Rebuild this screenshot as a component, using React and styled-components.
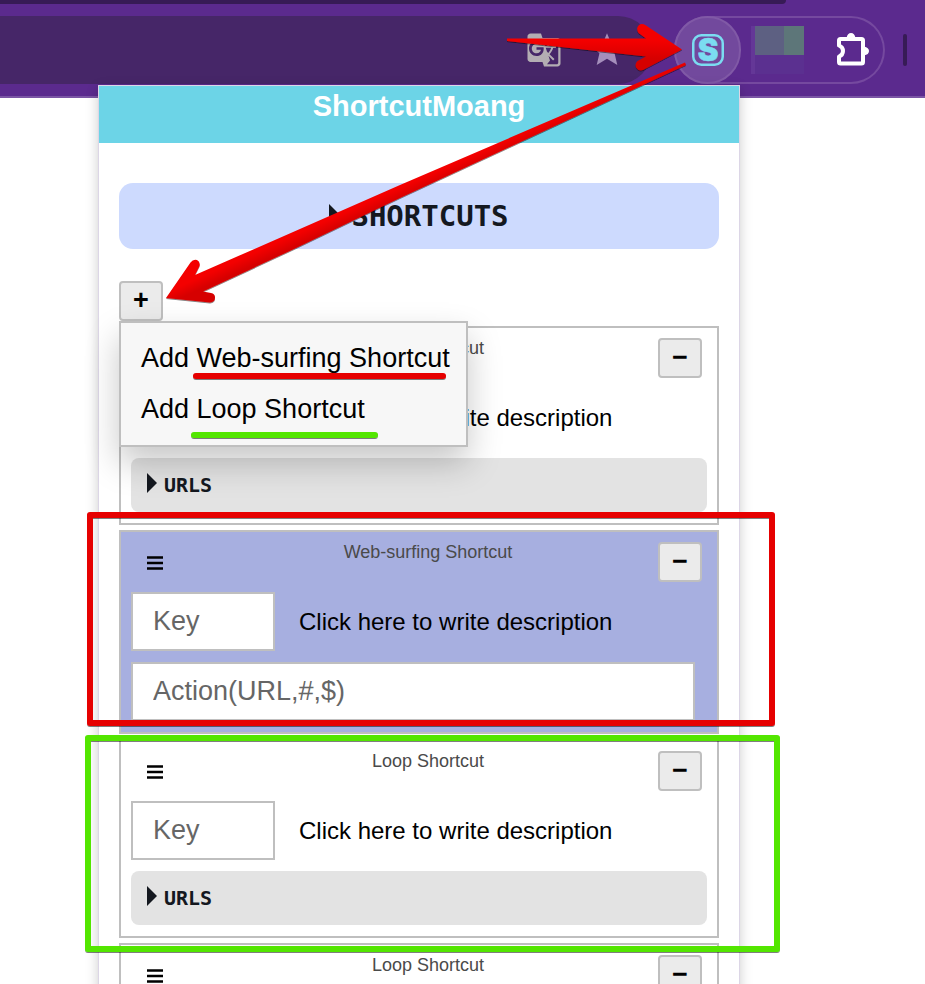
import React, { useState } from 'react';
import styled, { createGlobalStyle } from 'styled-components';
import { MdGTranslate, MdStar } from 'react-icons/md';

const GlobalStyle = createGlobalStyle`
  * {
    box-sizing: border-box;
  }

  body {
    margin: 0;
    background: #fff;
    font-family: 'Liberation Sans', Arial, sans-serif;
  }

  button,
  input {
    font-family: inherit;
  }
`;

const Screen = styled.div`
  position: relative;
  height: 100vh;
  overflow: hidden;
`;

const TabStrip = styled.div`
  background: #5b2a8e;

  div {
    width: 85%;
    height: 4px;
    background: #371b56;
    border-radius: 0 0 12px 0;
  }
`;

const Toolbar = styled.div`
  display: flex;
  align-items: center;
  padding: 12px 18px 12px 0;
  background: #5b2a8e;
  border-bottom: 2px solid #7b55a5;
`;

const AddressBar = styled.div`
  flex: 1;
  display: flex;
  align-items: center;
  justify-content: flex-end;
  gap: 25px;
  height: 68px;
  margin-right: 22px;
  padding-right: 25px;
  background: #462668;
  border-radius: 0 34px 34px 0;
`;

const ToolButton = styled.button`
  display: flex;
  padding: 0;
  border: none;
  background: none;
  color: ${({ $color }) => $color};
`;

const Extensions = styled.div`
  display: flex;
  align-items: center;
  height: 68px;
  padding-right: 15px;
  border-radius: 34px;
  box-shadow: inset 0 0 0 2px #75499f;
`;

const ActiveExtension = styled.button`
  display: flex;
  align-items: center;
  justify-content: center;
  width: 67px;
  height: 68px;
  margin-right: 10px;
  padding: 0;
  border: 2px solid #8059a6;
  border-radius: 34px;
  background: #72499d;
`;

const Mosaic = styled.div`
  display: grid;
  grid-template-columns: 4px 29px 20px;
  grid-template-rows: 29px 19px;
  margin-right: 32px;
  background: #5b3090;

  span:nth-child(1) {
    grid-row: 1 / 3;
    background: #643797;
  }

  span:nth-child(2) {
    background: #5d6082;
  }

  span:nth-child(3) {
    background: #5d7679;
  }
`;

const Divider = styled.div`
  width: 4px;
  height: 32px;
  margin-left: 18px;
  border-radius: 2px;
  background: #371b56;
`;

const Popup = styled.main`
  position: relative;
  margin: -13px 185px 0 98px;
  border: 1px solid #dcd6e6;
  background: #fff;
  box-shadow: 0 4px 12px rgba(0, 0, 0, 0.2);
`;

const Header = styled.header`
  padding: 4px 0 20px;
  background: #6cd4e7;

  h1 {
    margin: 0;
    color: #fff;
    font-size: 29px;
    line-height: 33px;
    text-align: center;
  }
`;

const Content = styled.div`
  padding: 40px 20px;
`;

const Section = styled.details`
  margin-bottom: 32px;
  border-radius: 14px;
  background: #cddafe;
`;

const Summary = styled.summary`
  display: flex;
  align-items: center;
  justify-content: ${({ $large }) => ($large ? 'center' : 'flex-start')};
  gap: ${({ $large }) => ($large ? '12px' : '7px')};
  height: ${({ $large }) => ($large ? '66px' : '54px')};
  padding: 0 16px;
  color: #14181f;
  font-family: 'DejaVu Sans Mono', monospace;
  font-size: ${({ $large }) => ($large ? '29px' : '20px')};
  font-weight: bold;
  list-style: none;

  svg {
    margin-bottom: 4px;
  }
`;

const AddArea = styled.div`
  position: relative;
  margin-bottom: 5px;
`;

const SquareButton = styled.button`
  display: flex;
  align-items: center;
  justify-content: center;
  width: 44px;
  height: 40px;
  padding: 0 0 2px;
  border: 2px solid #bfbfbf;
  border-radius: 4px;
  background: #ebebeb;
  color: #000;
  font-size: 27px;
  font-weight: bold;
  line-height: 30px;
`;

const Menu = styled.div`
  position: absolute;
  top: 100%;
  left: 0;
  z-index: 1;
  padding: 10px 0;
  border: 2px solid #bfbfbf;
  background: #f7f7f7;
  box-shadow: 0 16px 32px rgba(0, 0, 0, 0.22);
`;

const MenuItem = styled.button`
  display: block;
  width: 100%;
  height: 51px;
  padding: 0 16px 0 20px;
  border: none;
  background: none;
  color: #000;
  font-size: 27px;
  text-align: left;
  white-space: nowrap;
`;

const CardList = styled.div`
  display: flex;
  flex-direction: column;
  gap: 5px;
`;

const Card = styled.section`
  padding: 10px 10px 11px;
  border: 2px solid #bfbfbf;
  background: ${({ $active }) => ($active ? '#a7afe0' : '#fff')};
`;

const CardTop = styled.div`
  display: flex;
  align-items: flex-start;
  height: 50px;
  padding-right: 5px;
`;

const Handle = styled.button`
  width: 67px;
  padding: 14px 16px;
  border: none;
  background: none;
  text-align: left;

  svg {
    display: block;
  }
`;

const CardType = styled.span`
  flex: 1;
  color: #4a4a4a;
  font-size: 18px;
  line-height: 20px;
  text-align: center;
`;

const KeyRow = styled.div`
  display: flex;
  align-items: center;
  gap: 24px;
  margin-bottom: 11px;
`;

const TextInput = styled.input`
  display: block;
  width: ${({ $wide }) => ($wide ? 'calc(100% - 12px)' : '144px')};
  height: 59px;
  padding: 0 20px;
  border: 2px solid #bfbfbf;
  border-radius: 0;
  background: #fff;
  font-size: 27px;

  &::placeholder {
    color: #666;
  }
`;

const Description = styled.span`
  font-size: 24px;
`;

const Urls = styled.details`
  border-radius: 8px;
  background: #e3e3e3;
`;

const Marks = styled.svg`
  position: absolute;
  top: 0;
  left: 0;
  z-index: 2;
  pointer-events: none;
`;

const SHORTCUTS = [
  { id: 1, type: 'loop' },
  { id: 2, type: 'web' },
  { id: 3, type: 'loop' },
  { id: 4, type: 'loop' },
];

function Triangle() {
  return (
    <svg width="10" height="20" viewBox="0 0 10 20" aria-hidden="true">
      <path d="M0 0L10 10L0 20Z" fill="#14181f" />
    </svg>
  );
}

function Logo() {
  return (
    <svg width="32" height="32" viewBox="0 0 32 32" overflow="visible" aria-hidden="true">
      <rect x="1.25" y="1.25" width="29.5" height="29.5" rx="8" fill="none" stroke="#7bdcf1" strokeWidth="2.5" />
      <text
        x="16"
        y="27"
        textAnchor="middle"
        fontFamily="Inter, sans-serif"
        fontWeight="900"
        fontSize="31"
        fill="#7bdcf1"
        stroke="#7bdcf1"
        strokeWidth="0.6"
      >
        S
      </text>
    </svg>
  );
}

function PuzzleIcon() {
  return (
    <svg width="34" height="34" viewBox="0 0 34 34" aria-hidden="true">
      <path
        d="M4.500 6H25.500Q27 6 27 7.500V29Q27 30.500 25.500 30.500H4.500Q3 30.500 3 29V23.500Q7 22 7 18Q7 14 3 12.500V7.500Q3 6 4.500 6Z"
        fill="none"
        stroke="#fff"
        strokeWidth="4"
        strokeLinejoin="round"
      />
      <path d="M10.500 5Q11.500 0 15 0Q18.500 0 19.500 5ZM28 13.500Q33 14.500 33 18Q33 21.500 28 22.500Z" fill="#fff" />
    </svg>
  );
}

function ShortcutCard({ type }) {
  const isWeb = type === 'web';

  return (
    <Card $active={isWeb}>
      <CardTop>
        <Handle type="button" aria-label="Move shortcut">
          <svg width="16" height="14" viewBox="0 0 16 14">
            <path d="M0 1.500H16M0 7H16M0 12.500H16" stroke="#000" strokeWidth="2.500" />
          </svg>
        </Handle>
        <CardType>{isWeb ? 'Web-surfing Shortcut' : 'Loop Shortcut'}</CardType>
        <SquareButton type="button">−</SquareButton>
      </CardTop>
      <KeyRow>
        <TextInput type="text" placeholder="Key" aria-label="Key" />
        <Description>Click here to write description</Description>
      </KeyRow>
      {isWeb ? (
        <TextInput $wide type="text" placeholder="Action(URL,#,$)" aria-label="Action" />
      ) : (
        <Urls>
          <Summary>
            <Triangle />
            URLS
          </Summary>
        </Urls>
      )}
    </Card>
  );
}

// Arrows, underlines and frames that point out the two kinds of shortcut
function Annotations() {
  return (
    <Marks width="925" height="984" viewBox="0 0 925 984" aria-hidden="true">
      <defs>
        <linearGradient id="flat" x1="0" y1="0" x2="0" y2="1">
          <stop offset="0.35" stopColor="#f40404" />
          <stop offset="0.75" stopColor="#d60000" />
        </linearGradient>
        <linearGradient id="slope" gradientUnits="userSpaceOnUse" x1="290" y1="232" x2="299" y2="252">
          <stop offset="0.2" stopColor="#f40404" />
          <stop offset="0.7" stopColor="#d60000" />
        </linearGradient>
        <filter id="edge" x="-5%" y="-5%" width="110%" height="115%">
          <feDropShadow dx="0" dy="1" stdDeviation="0.4" floodColor="#000" floodOpacity="0.5" />
        </filter>
      </defs>
      <g filter="url(#edge)">
        <path
          d="M507 38.500L646 38.500L638.500 33Q635.500 28 639 25Q642 23 646 25.500L682 49.500L643 70Q638.500 71.500 636 67.500Q634.500 64 637.500 61L646 56.500L507 41Z"
          fill="url(#flat)"
        />
        <path
          d="M685 62.500L400 185L195 275L199.500 266Q200.500 262 197 260Q193 259 190.500 262.500L166 298L210 302.500Q215 302 215 297.500Q215 293.500 211 293L203 291.500L292 250L400 198L686 65Z"
          fill="url(#slope)"
        />
        <path d="M196 376H443" stroke="#e60000" strokeWidth="6" strokeLinecap="round" />
        <path d="M194 435H375" stroke="#52e600" strokeWidth="6" strokeLinecap="round" />
        <rect x="90" y="515" width="682" height="208" fill="none" stroke="#e60000" strokeWidth="6" strokeLinejoin="round" />
        <rect x="88" y="738" width="689" height="211" fill="none" stroke="#52e600" strokeWidth="6" strokeLinejoin="round" />
      </g>
    </Marks>
  );
}

function App() {
  const [menuOpen, setMenuOpen] = useState(true);

  return (
    <Screen>
      <GlobalStyle />
      <TabStrip>
        <div />
      </TabStrip>
      <Toolbar>
        <AddressBar>
          <ToolButton type="button" $color="#b3adb3" aria-label="Translate this page">
            <MdGTranslate size={36} />
          </ToolButton>
          <ToolButton type="button" $color="#a58fbc" aria-label="Bookmark this page">
            <MdStar size={40} />
          </ToolButton>
        </AddressBar>
        <Extensions>
          <ActiveExtension type="button" aria-label="ShortcutMoang">
            <Logo />
          </ActiveExtension>
          <Mosaic>
            <span />
            <span />
            <span />
          </Mosaic>
          <ToolButton type="button" $color="#fff" aria-label="Extensions">
            <PuzzleIcon />
          </ToolButton>
        </Extensions>
        <Divider />
      </Toolbar>

      <Popup>
        <Header>
          <h1>ShortcutMoang</h1>
        </Header>
        <Content>
          <Section>
            <Summary $large>
              <Triangle />
              SHORTCUTS
            </Summary>
          </Section>

          <AddArea>
            <SquareButton type="button" onClick={() => setMenuOpen(!menuOpen)}>
              +
            </SquareButton>
            {menuOpen && (
              <Menu>
                <MenuItem type="button">Add Web-surfing Shortcut</MenuItem>
                <MenuItem type="button">Add Loop Shortcut</MenuItem>
              </Menu>
            )}
          </AddArea>

          <CardList>
            {SHORTCUTS.map(shortcut => (
              <ShortcutCard key={shortcut.id} type={shortcut.type} />
            ))}
          </CardList>
        </Content>
      </Popup>

      <Annotations />
    </Screen>
  );
}

export default App;
